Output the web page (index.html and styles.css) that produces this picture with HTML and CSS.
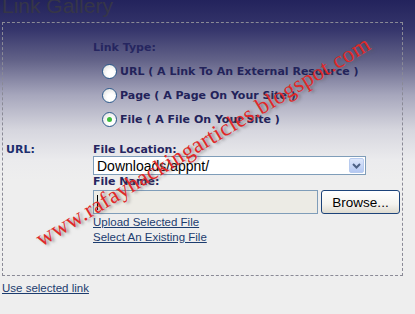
FILE: index.html
```html
<!DOCTYPE html>
<html>
<head>
  <meta charset="UTF-8">
  <title>Link Gallery</title>
  <link rel="stylesheet" href="styles.css">
</head>
<body>
  <h1 class="title">Link Gallery</h1>
  <div class="gallery">
    <div class="row">
      <div class="side"></div>
      <div class="main">
        <div class="label">Link Type:</div>
        <div class="option"><span class="radio"></span>URL ( A Link To An External Resource )</div>
        <div class="option"><span class="radio"></span>Page ( A Page On Your Site )</div>
        <div class="option"><span class="radio checked"></span>File ( A File On Your Site )</div>
      </div>
    </div>
    <div class="row url-row">
      <div class="side label url-label">URL:</div>
      <div class="main">
        <div class="label">File Location:</div>
        <div class="select">
          <span class="select-text">Downloads/appnt/</span>
          <span class="select-btn">
            <svg width="9" height="6" viewBox="0 0 9 6"><path d="M1 1 L4.5 4.5 L8 1" fill="none" stroke="#4d6185" stroke-width="2"/></svg>
          </span>
        </div>
        <div class="label">File Name:</div>
        <div class="file-row">
          <div class="file-input"><span class="caret"></span></div>
          <button class="browse">Browse...</button>
        </div>
        <a class="link" href="#">Upload Selected File</a>
        <a class="link" href="#">Select An Existing File</a>
      </div>
    </div>
  </div>
  <a class="link use-link" href="#">Use selected link</a>
  <div class="watermark">www.rafayhackingarticles.blogspot.com</div>
</body>
</html>
```

FILE: styles.css
```css
body {
  margin: 0;
  width: 415px;
  height: 314px;
  overflow: hidden;
  position: relative;
  font-family: "DejaVu Sans", Verdana, sans-serif;
  background: linear-gradient(to bottom, #23235c 0px, #36366c 30px, #626288 60px, #a6a6bc 95px, #d6d6de 130px, #ebebed 160px, #eeeeee 180px);
}
.title {
  margin: 0;
  padding-left: 2px;
  height: 22px;
  line-height: 12px;
  font-family: "Liberation Sans", Arial, sans-serif;
  font-weight: normal;
  font-size: 21px;
  color: #363648;
}
.gallery {
  margin-left: 2px;
  width: 401px;
  height: 254px;
  border: 1px dashed #8a8a96;
  padding-top: 18px;
  box-sizing: border-box;
}
.row {
  display: flex;
}
.side {
  width: 90px;
  flex-shrink: 0;
}
.label {
  font-size: 11px;
  font-weight: bold;
  line-height: 13px;
  color: #262660;
}
.url-label {
  padding-left: 3px;
  width: 87px;
  color: #1e2f6e;
}
.option {
  display: flex;
  align-items: center;
  height: 24px;
  padding-left: 9px;
  font-size: 11px;
  font-weight: bold;
  color: #23235a;
}
.main > .label + .option {
  margin-top: 5px;
}
.radio {
  width: 13px;
  height: 13px;
  border: 1px solid #2c5a8c;
  border-radius: 50%;
  background: radial-gradient(circle at 60% 65%, #ffffff 30%, #dcdcd8 100%);
  margin-right: 3px;
  position: relative;
}
.radio.checked::after {
  content: "";
  position: absolute;
  left: 4px;
  top: 4px;
  width: 5px;
  height: 5px;
  border-radius: 50%;
  background: #3dbb3d;
}
.url-row {
  margin-top: 12px;
}
.select {
  display: flex;
  align-items: center;
  justify-content: space-between;
  width: 273px;
  height: 19px;
  box-sizing: border-box;
  border: 1px solid #7f9db9;
  background: #fff;
  padding: 0 1px 0 3px;
}
.select-text {
  font-family: "Liberation Sans", Arial, sans-serif;
  font-size: 14px;
  color: #000;
}
.select-btn {
  width: 15px;
  height: 15px;
  box-sizing: border-box;
  border: 1px solid #b8cbef;
  border-radius: 2px;
  background: linear-gradient(to bottom, #dde7fb, #b4c8f2);
  display: flex;
  align-items: center;
  justify-content: center;
}
.file-row {
  display: flex;
  gap: 3px;
  margin-top: 2px;
  margin-bottom: 1px;
}
.file-input {
  width: 225px;
  height: 24px;
  box-sizing: border-box;
  border: 1px solid #7f9db9;
  background: #ecebe5;
  position: relative;
}
.caret {
  position: absolute;
  left: 3px;
  top: 4px;
  width: 1px;
  height: 15px;
  background: #000;
}
.browse {
  width: 79px;
  height: 24px;
  margin: 0;
  padding: 0;
  border: 1px solid #1c4379;
  border-radius: 3px;
  background: linear-gradient(to bottom, #ffffff, #f4f3ee 60%, #dedbd0);
  font-family: "Liberation Sans", Arial, sans-serif;
  font-size: 13.5px;
  color: #000;
}
.link {
  display: block;
  font-family: "Liberation Sans", Tahoma, sans-serif;
  font-size: 11.5px;
  line-height: 15px;
  color: #1c3c6e;
  text-decoration: underline;
}
.use-link {
  display: inline-block;
  margin: 5px 0 0 2px;
}
.watermark {
  position: absolute;
  left: 38px;
  top: 228px;
  line-height: 26px;
  transform: rotate(-31deg);
  transform-origin: left center;
  font-family: "Liberation Serif", "Times New Roman", serif;
  font-size: 23px;
  color: #e02828;
  text-shadow: 2px 2px 3px rgba(90, 90, 90, 0.6);
  white-space: nowrap;
  letter-spacing: 0.4px;
}
```
